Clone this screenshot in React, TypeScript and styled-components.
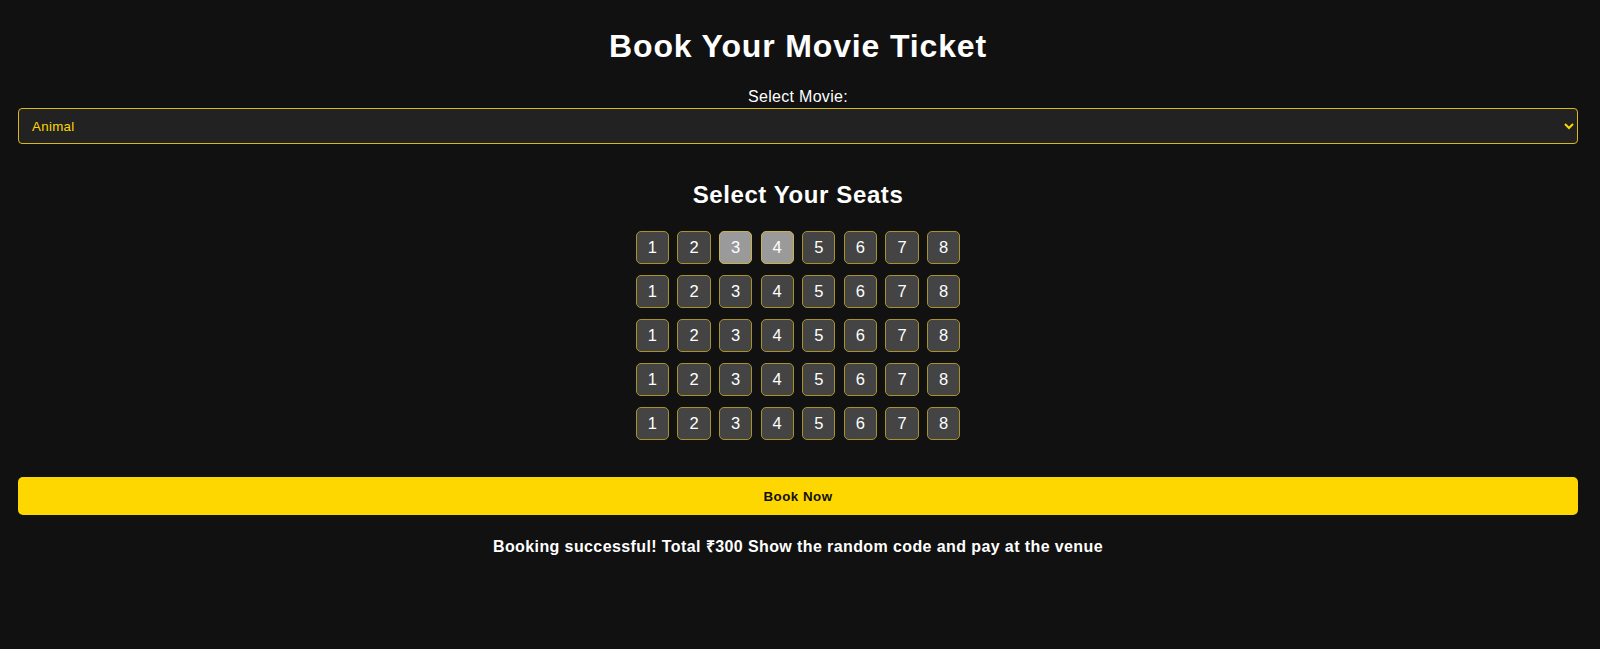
import React, { useState } from "react";
import styled, { createGlobalStyle } from "styled-components";

const Global = createGlobalStyle`
  html, body {
    margin: 0;
    padding: 0;
    background: #111111;
    color: #ffffff;
    font-family: "Liberation Sans", Arial, sans-serif;
  }
`;

const Page = styled.div`
  min-height: 649px;
  box-sizing: border-box;
  padding: 28px 22px 0 18px;
  display: flex;
  flex-direction: column;
  align-items: stretch;
  text-align: center;
`;

const Title = styled.h1`
  margin: 0 0 23px;
  font-size: 32px;
  font-weight: 700;
  line-height: normal;
  letter-spacing: 0.85px;
`;

const Label = styled.label`
  display: block;
  font-size: 16px;
  line-height: normal;
  margin-bottom: 2px;
  letter-spacing: 0.3px;
`;

const MovieSelect = styled.select`
  display: block;
  width: 100%;
  height: 36px;
  box-sizing: border-box;
  padding: 0 8px 0 9px;
  background: #222222;
  color: #ffd700;
  border: 1px solid #d9b81c;
  border-radius: 4px;
  font-family: "Liberation Sans", Arial, sans-serif;
  font-size: 13.33px;
  letter-spacing: 0.3px;
  color-scheme: dark;
  outline: none;
`;

const SeatsTitle = styled.h2`
  margin: 37px 0 22px;
  font-size: 24px;
  font-weight: 700;
  line-height: normal;
  letter-spacing: 0.6px;
`;

const SeatGrid = styled.div`
  display: flex;
  flex-direction: column;
  align-items: center;
  gap: 10.7px;
`;

const SeatRow = styled.div`
  display: flex;
  gap: 8.3px;
`;

const Seat = styled.button<{ $selected: boolean }>`
  width: 33.3px;
  height: 33.3px;
  box-sizing: border-box;
  padding: 0;
  border: 1px solid ${(p) => (p.$selected ? "#c9b24a" : "#a8922a")};
  border-radius: 5px;
  background: ${(p) => (p.$selected ? "#9a9a9a" : "#444444")};
  color: #ffffff;
  font-family: "Liberation Sans", Arial, sans-serif;
  font-size: 16.5px;
  display: flex;
  align-items: center;
  justify-content: center;
  cursor: pointer;
`;

const BookButton = styled.button`
  margin-top: 37px;
  width: 100%;
  height: 38px;
  border: none;
  border-radius: 5px;
  background: #ffd700;
  color: #111111;
  font-family: "Liberation Sans", Arial, sans-serif;
  font-size: 13.33px;
  font-weight: 700;
  letter-spacing: 0.5px;
  cursor: pointer;
`;

const Message = styled.p`
  margin: 20px 0 0;
  font-size: 16px;
  font-weight: 700;
  line-height: normal;
  letter-spacing: 0.4px;
`;

export default function App() {
  const [movie, setMovie] = useState("Animal");
  const [selected, setSelected] = useState<string[]>(["0-2", "0-3"]);

  const toggle = (id: string) =>
    setSelected((s) => (s.includes(id) ? s.filter((x) => x !== id) : [...s, id]));

  return (
    <>
      <Global />
      <Page>
        <Title>Book Your Movie Ticket</Title>
        <Label htmlFor="movie">Select Movie:</Label>
        <MovieSelect id="movie" value={movie} onChange={(e) => setMovie(e.target.value)}>
          <option value="Animal">Animal</option>
          <option value="Jawan">Jawan</option>
          <option value="Pathaan">Pathaan</option>
        </MovieSelect>
        <SeatsTitle>Select Your Seats</SeatsTitle>
        <SeatGrid>
          {[0, 1, 2, 3, 4].map((r) => (
            <SeatRow key={r}>
              {[1, 2, 3, 4, 5, 6, 7, 8].map((n) => {
                const id = `${r}-${n - 1}`;
                return (
                  <Seat key={id} $selected={selected.includes(id)} onClick={() => toggle(id)}>
                    {n}
                  </Seat>
                );
              })}
            </SeatRow>
          ))}
        </SeatGrid>
        <BookButton>Book Now</BookButton>
        <Message>Booking successful! Total ₹300 Show the random code and pay at the venue</Message>
      </Page>
    </>
  );
}
